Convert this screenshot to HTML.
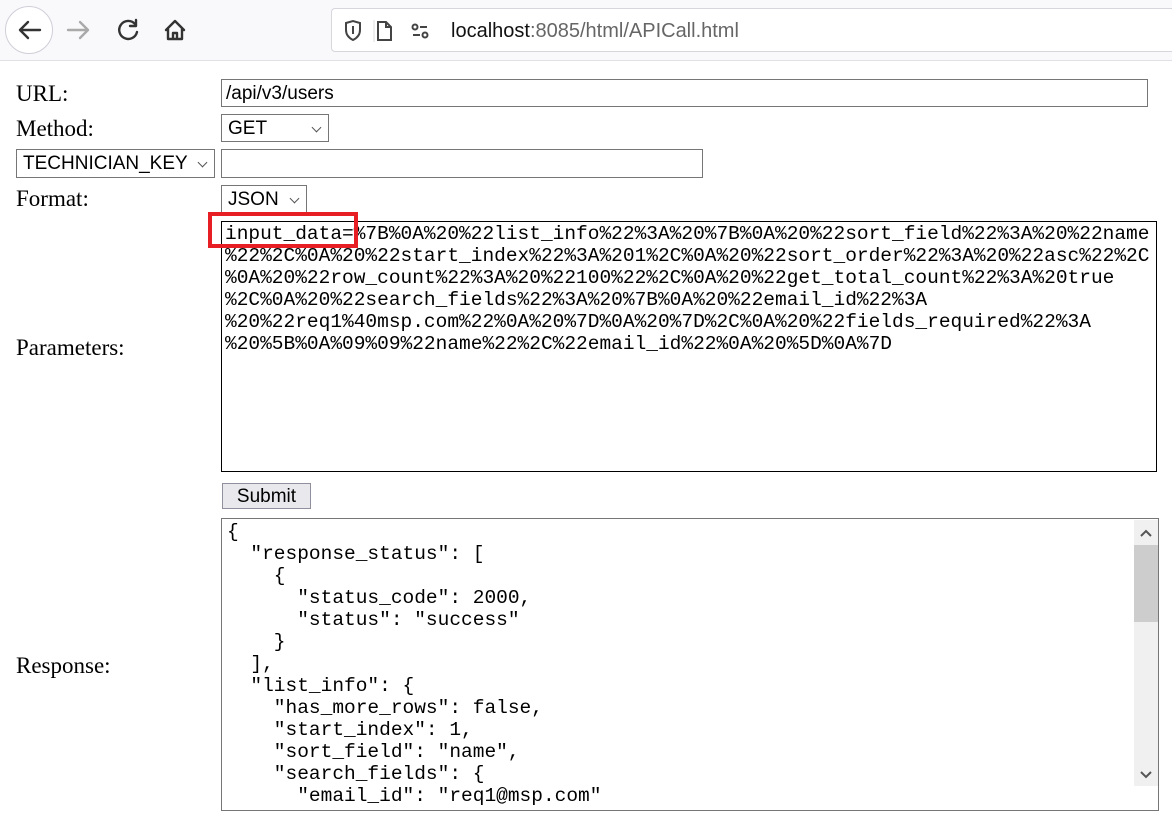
<!DOCTYPE html>
<html><head><style>
body{margin:0;width:1172px;height:823px;overflow:hidden;background:#fff;position:relative;font-family:"Liberation Serif",serif;}
.a{position:absolute;box-sizing:border-box}
.lbl{font-size:23px;color:#000;line-height:24px}
.inp{border:1px solid #767676;background:#fff;font-family:"Liberation Sans",sans-serif;font-size:19px;line-height:28px;padding-left:4px;color:#000}
.sel{border:1px solid #767676;background:#fff;font-family:"Liberation Sans",sans-serif;font-size:19px;line-height:28px;padding-left:6px;color:#000}
.chev{position:absolute;right:8px;top:9px;width:6px;height:6px;border-right:1px solid #555;border-bottom:1px solid #555;transform:rotate(45deg)}
.mono{font-family:"Liberation Mono",monospace;font-size:19.5px;line-height:22px;white-space:pre;color:#000}
</style></head><body>
<div class="a" style="left:0;top:0;width:1172px;height:61px;background:#f9f9fb;border-bottom:1px solid #e0e0e6"></div>
<div class="a" style="left:5px;top:6px;width:48px;height:48px;border-radius:50%;border:1px solid #cfcfd8;background:#fff"></div>
<svg class="a" style="left:0;top:0" width="200" height="60"><g fill="none" stroke-width="2.4" stroke-linecap="round" stroke-linejoin="round">
<path d="M40 30H20M28 22l-8 8 8 8" stroke="#333"/>
<path d="M68 30h20M80 22l8 8-8 8" stroke="#aaa"/>
<path d="M135 24a9 9 0 1 0 2 8M136 20v6h-6" stroke="#333"/>
<path d="M166 30l9-9 9 9M168 28v11h14V28M173 39v-6h4v6" stroke="#333"/></g></svg>
<div class="a" style="left:331px;top:8px;width:845px;height:44px;background:#fff;border:1px solid #d6d6dc;border-radius:4px"></div>
<svg class="a" style="left:340px;top:18px" width="110" height="26"><g fill="none" stroke="#444" stroke-width="2">
<path d="M6 5l7-2 7 2v7c0 5-3 8-7 10-4-2-7-5-7-10z"/><path d="M13 8v8"/>
<path d="M38 4h8l5 5v13H38z"/><path d="M46 4v5h5"/>
<circle cx="75" cy="9" r="2.5"/><path d="M80 9h7M73 17h7"/><circle cx="85" cy="17" r="2.5"/></g>
<path d="M34 2v22" stroke="#ddd"/></svg>
<div class="a" style="left:451px;top:18px;font-family:'Liberation Sans',sans-serif;font-size:20px;line-height:26px;color:#111">localhost<span style="color:#666">:8085/html/APICall.html</span></div>

<div class="a lbl" style="left:16px;top:82px">URL:</div>
<div class="a inp" style="left:221px;top:79px;width:927px;height:28px">/api/v3/users</div>
<div class="a lbl" style="left:16px;top:117px">Method:</div>
<div class="a sel" style="left:221px;top:114px;width:108px;height:28px">GET<span class="chev"></span></div>
<div class="a sel" style="left:16px;top:149px;width:199px;height:29px">TECHNICIAN_KEY<span class="chev"></span></div>
<div class="a inp" style="left:221px;top:149px;width:482px;height:29px"></div>
<div class="a lbl" style="left:16px;top:187px">Format:</div>
<div class="a sel" style="left:221px;top:185px;width:86px;height:28px">JSON<span class="chev"></span></div>
<div class="a lbl" style="left:16px;top:336px">Parameters:</div>
<div class="a" style="left:221px;top:221px;width:936px;height:251px;border:1px solid #000;background:#fff"></div>
<div class="a mono" style="left:225px;top:223px">input_data=%7B%0A%20%22list_info%22%3A%20%7B%0A%20%22sort_field%22%3A%20%22name
%22%2C%0A%20%22start_index%22%3A%201%2C%0A%20%22sort_order%22%3A%20%22asc%22%2C
%0A%20%22row_count%22%3A%20%22100%22%2C%0A%20%22get_total_count%22%3A%20true
%2C%0A%20%22search_fields%22%3A%20%7B%0A%20%22email_id%22%3A
%20%22req1%40msp.com%22%0A%20%7D%0A%20%7D%2C%0A%20%22fields_required%22%3A
%20%5B%0A%09%09%22name%22%2C%22email_id%22%0A%20%5D%0A%7D</div>
<div class="a" style="left:208px;top:212px;width:150px;height:36px;border:4px solid #e81e25"></div>
<div class="a" style="left:222px;top:483px;width:89px;height:26px;background:#e9e9ed;border:1px solid #8f8f9d;font-family:'Liberation Sans',sans-serif;font-size:19px;line-height:26px;text-align:center">Submit</div>
<div class="a lbl" style="left:16px;top:654px">Response:</div>
<div class="a" style="left:221px;top:518px;width:938px;height:293px;border:1px solid #767676;background:#fff;overflow:hidden">
<div class="a mono" style="left:5px;top:2px">{
  "response_status": [
    {
      "status_code": 2000,
      "status": "success"
    }
  ],
  "list_info": {
    "has_more_rows": false,
    "start_index": 1,
    "sort_field": "name",
    "search_fields": {
      "email_id": "req1@msp.com"</div>
<div class="a" style="left:912px;top:1px;width:24px;height:266px;background:#f0f0f0"></div>
<div class="a" style="left:912px;top:26px;width:24px;height:77px;background:#cdcdcd"></div>
<svg class="a" style="left:912px;top:1px" width="24" height="266"><path d="M7 16l5-5 5 5M7 252l5 5 5-5" fill="none" stroke="#555" stroke-width="2"/></svg>
</div>
</body></html>
